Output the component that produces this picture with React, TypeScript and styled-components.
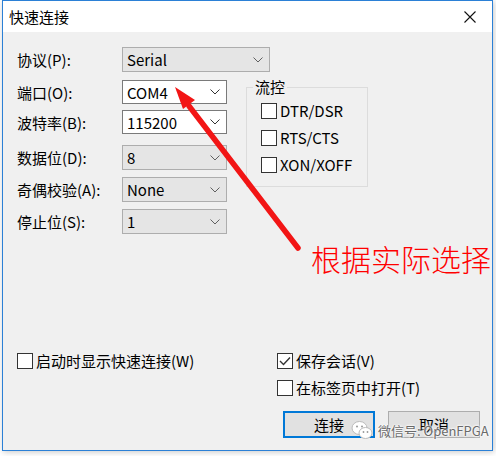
import React from 'react';
import styled, { createGlobalStyle } from 'styled-components';

const Global = createGlobalStyle`
  body {
    margin: 0;
    background: #ffffff;
    font-family: "Noto Sans CJK SC", "Noto Sans", sans-serif;
    font-size: 15px;
    color: #000;
  }
`;

const Stage = styled.div`
  position: relative;
  width: 496px;
  height: 456px;
  overflow: hidden;
`;

const Window = styled.div`
  margin-left: 2px;
  width: 491px;
  height: 451px;
  box-sizing: border-box;
  border: 1px solid #2b80d6;
  background: #f0f0f0;
  box-shadow: 1px 1px 6px rgba(0, 0, 0, 0.22);
  display: flex;
  flex-direction: column;
`;

const TitleBar = styled.div`
  height: 31px;
  background: #fff;
  display: flex;
  align-items: center;
  justify-content: space-between;
  padding: 0 16px 0 6px;
  font-size: 15px;
  line-height: 1;
`;

const Body = styled.div`
  flex: 1;
  display: flex;
  flex-direction: column;
  padding: 15px 0 12px 14px;
`;

/* each row track holds the control plus the space below it */
const Form = styled.div`
  display: grid;
  grid-template-columns: 105px 105px 19px 122px;
  grid-template-rows: 33px 30px 35px 32px 32px 25px;
  align-items: start;
`;

const Label = styled.div`
  grid-column: 1;
  height: 25px;
  display: flex;
  align-items: center;
  white-space: nowrap;
  line-height: 1;
`;

const Combo = styled.div<{ $editable?: boolean; $wide?: boolean }>`
  grid-column: ${p => (p.$wide ? '2 / span 3' : '2')};
  width: ${p => (p.$wide ? 148 : 105)}px;
  height: ${p => (p.$editable ? 24 : 25)}px;
  box-sizing: border-box;
  display: flex;
  align-items: center;
  justify-content: space-between;
  padding: 0 6px 0 4px;
  background: ${p => (p.$editable ? '#fff' : '#e5e5e5')};
  border: 1px solid ${p => (p.$editable ? '#7a7a7a' : '#adadad')};
  line-height: 1;
`;

const Group = styled.fieldset`
  grid-column: 4;
  grid-row: 2 / span 4;
  margin: -2px 0 0 0;
  padding: 7px 0 13px 14px;
  border: 1px solid #dcdcdc;
  min-inline-size: 0;
  display: flex;
  flex-direction: column;
  gap: 11px;
`;

const Legend = styled.legend`
  margin-left: -8px;
  padding: 0 2px;
  line-height: 18px;
`;

const CheckRow = styled.label`
  display: flex;
  align-items: center;
  gap: 3px;
  height: 16px;
  line-height: 16px;
  white-space: nowrap;
`;

const Box = styled.span`
  width: 16px;
  height: 16px;
  box-sizing: border-box;
  border: 1px solid #333;
  background: #fff;
  display: flex;
  align-items: center;
  justify-content: center;
  flex: none;
`;

const Bottom = styled.div`
  margin-top: auto;
  display: grid;
  grid-template-columns: 260px 1fr;
  align-items: start;
`;

const RightCol = styled.div`
  display: flex;
  flex-direction: column;
  gap: 11px;
`;

const ButtonRow = styled.div`
  display: flex;
  gap: 13px;
  margin: 4px 0 0 6px;
`;

const Button = styled.button<{ $default?: boolean }>`
  width: 92px;
  height: 27px;
  box-sizing: border-box;
  background: #e1e1e1;
  border: ${p => (p.$default ? '2px solid #0078d7' : '1px solid #adadad')};
  font-family: inherit;
  font-size: 15px;
  color: #000;
  padding: 0;
  line-height: 1;
`;

const Overlay = styled.svg`
  position: absolute;
  left: 0;
  top: 0;
  pointer-events: none;
`;

const Note = styled.div`
  position: absolute;
  left: 311px;
  top: 243px;
  color: #ff0000;
  font-size: 30px;
  font-weight: 200;
  line-height: 1;
  white-space: nowrap;
`;

const Watermark = styled.div`
  position: absolute;
  left: 351px;
  top: 420px;
  display: flex;
  align-items: center;
  gap: 5px;
  color: #6a6a6a;
  font-size: 13px;
  line-height: 1;
  text-shadow: 0 0 2px #fff, 0 0 2px #fff, 0 0 3px #fff;
  white-space: nowrap;
`;

const Chevron = ({ dim }: { dim?: boolean }) => (
  <svg width="10" height="6" viewBox="0 0 10 6">
    <path d="M0.5 0.5 L5 5 L9.5 0.5" fill="none" stroke={dim ? '#606060' : '#333'} strokeWidth="1" />
  </svg>
);

const Check = ({ checked, children }: { checked?: boolean; children: React.ReactNode }) => (
  <CheckRow>
    <Box>
      {checked && (
        <svg width="12" height="10" viewBox="0 0 12 10">
          <path d="M1 5 L4.5 8.5 L11 1.5" fill="none" stroke="#333" strokeWidth="1.4" />
        </svg>
      )}
    </Box>
    {children}
  </CheckRow>
);

const fields = [
  { label: '协议(P):', value: 'Serial', editable: false, wide: true },
  { label: '端口(O):', value: 'COM4', editable: true },
  { label: '波特率(B):', value: '115200', editable: true },
  { label: '数据位(D):', value: '8', editable: false },
  { label: '奇偶校验(A):', value: 'None', editable: false },
  { label: '停止位(S):', value: '1', editable: false },
];

export default function App() {
  return (
    <Stage>
      <Global />
      <Window>
        <TitleBar>
          <span>快速连接</span>
          <svg width="12" height="12" viewBox="0 0 12 12">
            <path d="M0.5 0.5 L11.5 11.5 M11.5 0.5 L0.5 11.5" stroke="#111" strokeWidth="1.1" />
          </svg>
        </TitleBar>
        <Body>
          <Form>
            {fields.map((f, i) => (
              <React.Fragment key={f.label}>
                <Label style={{ gridRow: i + 1 }}>{f.label}</Label>
                <Combo $editable={f.editable} $wide={f.wide} style={{ gridRow: i + 1 }}>
                  <span>{f.value}</span>
                  <Chevron dim={!f.editable} />
                </Combo>
              </React.Fragment>
            ))}
            <Group>
              <Legend>流控</Legend>
              <Check>DTR/DSR</Check>
              <Check>RTS/CTS</Check>
              <Check>XON/XOFF</Check>
            </Group>
          </Form>
          <Bottom>
            <Check>启动时显示快速连接(W)</Check>
            <RightCol>
              <Check checked>保存会话(V)</Check>
              <Check>在标签页中打开(T)</Check>
              <ButtonRow>
                <Button $default>连接</Button>
                <Button>取消</Button>
              </ButtonRow>
            </RightCol>
          </Bottom>
        </Body>
      </Window>

      <Overlay width="496" height="456" viewBox="0 0 496 456">
        <path d="M298 248 L189 106" stroke="#f21515" strokeWidth="5.5" strokeLinecap="round" />
        <polygon points="175,87 195,100 183,109" fill="#f21515" />
      </Overlay>
      <Note>根据实际选择</Note>

      <Watermark>
        <svg width="22" height="20" viewBox="0 0 22 20">
          <ellipse cx="8.5" cy="8" rx="7.5" ry="6.5" fill="#fff" stroke="#bbb" strokeWidth="1" />
          <circle cx="6" cy="6.5" r="1" fill="#999" />
          <circle cx="11" cy="6.5" r="1" fill="#999" />
          <ellipse cx="14.5" cy="13" rx="6.5" ry="5.5" fill="#fff" stroke="#bbb" strokeWidth="1" />
          <circle cx="12.5" cy="12" r="0.9" fill="#999" />
          <circle cx="16.5" cy="12" r="0.9" fill="#999" />
        </svg>
        <span>微信号: OpenFPGA</span>
      </Watermark>
    </Stage>
  );
}
